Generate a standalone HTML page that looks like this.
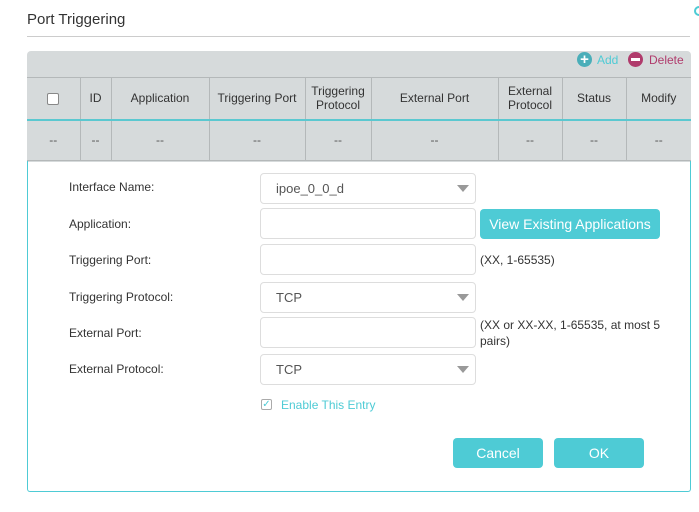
<!DOCTYPE html>
<html><head><style>
*{box-sizing:border-box;margin:0;padding:0}
body{width:699px;height:512px;background:#fff;font-family:"Liberation Sans",Arial,sans-serif;position:relative;overflow:hidden;color:#333}
.a{position:absolute}
.title{left:27px;top:11px;font-size:15px;color:#333}
.hr{left:27px;top:36px;width:663px;height:1px;background:#ccc}
.panel{left:27px;top:51px;width:664px;height:111px;background:#d6dadb;border-radius:4px 4px 0 0}
table{position:absolute;left:27px;top:77px;width:664px;border-collapse:collapse;font-size:12px;color:#333}
td{border:1px solid #b4b8b9;text-align:center;line-height:14px;padding:0}
tr.h td{height:42px}
tr.d td{height:41px;color:#555;border-top:2px solid #5bc8d0}
.form{left:27px;top:161px;width:664px;height:331px;border:1px solid #4ecbd5;border-top:none;border-radius:0 0 3px 3px}
.lbl{left:69px;font-size:12px;color:#333}
.in{left:260px;width:216px;height:31px;border:1px solid #ddd;border-radius:4px;background:#fff;font-size:13px;color:#555;padding:7px 0 0 15px}
.arr{position:absolute;right:6px;top:11px;width:0;height:0;border-left:6px solid transparent;border-right:6px solid transparent;border-top:7px solid #999}
.hint{left:480px;font-size:12px;color:#333;line-height:16px}
.btn{background:#4ecbd5;color:#fff;border-radius:4px;text-align:center;font-size:14px}
</style></head><body>
<div class="a title">Port Triggering</div>
<div class="a" style="left:694px;top:6px;width:10px;height:10px;border:2px solid #4ecbd5;border-radius:50%"></div>
<div class="a hr"></div>
<div class="a panel"></div>
<div class="a" style="left:577px;top:52px;width:15px;height:15px;border-radius:50%;background:#4aaeb9;color:#fff;font-size:15px;line-height:15px;text-align:center;font-weight:bold">+</div>
<div class="a" style="left:597px;top:53px;font-size:12px;color:#4ecbd5">Add</div>
<div class="a" style="left:628px;top:52px;width:15px;height:15px;border-radius:50%;background:#b03b6c"><div style="margin:6px 3px;width:9px;height:3px;background:#fff"></div></div>
<div class="a" style="left:649px;top:53px;font-size:12px;color:#b03b6c">Delete</div>
<table>
<colgroup><col style="width:53px"><col style="width:31px"><col style="width:98px"><col style="width:96px"><col style="width:66px"><col style="width:127px"><col style="width:64px"><col style="width:64px"><col style="width:65px"></colgroup>
<tr class="h"><td style="border-left:none"><span style="display:inline-block;width:12px;height:12px;border:1px solid #888;border-radius:2px;background:#fff;vertical-align:middle"></span></td><td>ID</td><td>Application</td><td>Triggering Port</td><td>Triggering<br>Protocol</td><td>External Port</td><td>External<br>Protocol</td><td>Status</td><td style="border-right:none">Modify</td></tr>
<tr class="d"><td style="border-left:none">--</td><td>--</td><td>--</td><td>--</td><td>--</td><td>--</td><td>--</td><td>--</td><td style="border-right:none">--</td></tr>
</table>
<div class="a form"></div>
<div class="a lbl" style="top:180px">Interface Name:</div>
<div class="a lbl" style="top:217px">Application:</div>
<div class="a lbl" style="top:253px">Triggering Port:</div>
<div class="a lbl" style="top:290px">Triggering Protocol:</div>
<div class="a lbl" style="top:326px">External Port:</div>
<div class="a lbl" style="top:362px">External Protocol:</div>
<div class="a in" style="top:173px">ipoe_0_0_d<div class="arr"></div></div>
<div class="a in" style="top:208px"></div>
<div class="a in" style="top:244px"></div>
<div class="a in" style="top:282px">TCP<div class="arr"></div></div>
<div class="a in" style="top:317px"></div>
<div class="a in" style="top:354px">TCP<div class="arr"></div></div>
<div class="a btn" style="left:480px;top:209px;width:180px;height:30px;line-height:30px">View Existing Applications</div>
<div class="a hint" style="top:252px">(XX, 1-65535)</div>
<div class="a hint" style="top:317px">(XX or XX-XX, 1-65535, at most 5<br>pairs)</div>
<div class="a" style="left:261px;top:399px;width:11px;height:11px;border:1px solid #aaa;border-radius:2px;color:#4ecbd5;font-size:10px;line-height:9px;text-align:center">✓</div>
<div class="a" style="left:281px;top:398px;font-size:12px;color:#4ecbd5">Enable This Entry</div>
<div class="a btn" style="left:453px;top:438px;width:90px;height:30px;line-height:30px">Cancel</div>
<div class="a btn" style="left:554px;top:438px;width:90px;height:30px;line-height:30px">OK</div>
</body></html>
